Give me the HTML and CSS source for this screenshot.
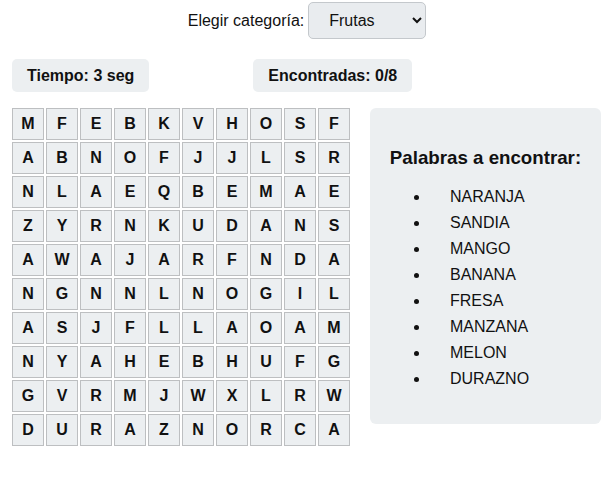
FILE: index.html
```html
<!DOCTYPE html>
<html lang="es">
<head>
<meta charset="UTF-8">
<title>Sopa de letras</title>
<link rel="stylesheet" href="styles.css">
</head>
<body>

<div class="top">
<label for="cat">Elegir categoría:</label>
<select id="cat">
<option>Frutas</option>
<option>Animales</option>
<option>Colores</option>
</select>
</div>

<div class="stats">
<div class="stat">Tiempo: <span id="time">3</span> seg</div>
<div class="stat">Encontradas: <span id="found">0</span>/8</div>
</div>

<div class="main">

<div class="board" id="board"></div>

<div class="panel">
<h3>Palabras a encontrar:</h3>
<ul id="words">
<li>NARANJA</li>
<li>SANDIA</li>
<li>MANGO</li>
<li>BANANA</li>
<li>FRESA</li>
<li>MANZANA</li>
<li>MELON</li>
<li>DURAZNO</li>
</ul>
</div>

</div>

<script>
let rows=[
"MFEBKVHOSF",
"ABNOFJJLSR",
"NLAEQBEMAE",
"ZYRNKUDANS",
"AWAJARFNDA",
"NGNNLNOGIL",
"ASJFLLAOAM",
"NYAHEBHUFG",
"GVRMJWXLRW",
"DURAZNORCA"
]

let board=document.getElementById("board")

board.innerHTML=rows.map(r=>
r.split("").map(c=>`<div class="cell">${c}</div>`).join("")
).join("")
</script>

</body>
</html>
```

FILE: styles.css
```css
body{
font-family:"Liberation Sans", Arial, sans-serif;
margin:0;
background:white;
color:#111;
}

.top{
display:flex;
justify-content:center;
align-items:center;
gap:4px;
margin-top:2px;
font-size:16px;
}

select{
width:118px;
height:37px;
padding:0 10px 0 16px;
font-size:16px;
font-family:inherit;
background:#e9ecef;
border:1px solid #c4c8cc;
border-radius:5px;
color:#111;
}

.stats{
display:flex;
gap:104px;
padding-left:12px;
margin-top:20px;
}

.stat{
background:#eceff1;
padding:8px 15px 7px;
line-height:18px;
border-radius:5px;
font-weight:bold;
font-size:16px;
}

.main{
display:flex;
align-items:flex-start;
gap:20px;
padding-left:12px;
margin-top:16px;
}

.board{
display:grid;
grid-template-columns:repeat(10,32px);
grid-auto-rows:32px;
gap:2px;
}

.cell{
background:#eceff1;
border:1px solid #bdbfc1;
display:flex;
align-items:center;
justify-content:center;
font-weight:bold;
font-size:16px;
}

.panel{
background:#eceff1;
width:211px;
padding:20px 10px;
border-radius:6px;
}

.panel h3{
text-align:center;
white-space:nowrap;
font-size:18.72px;
line-height:22px;
margin:19px 0 19px;
}

.panel ul{
margin:0 0 16px;
padding-left:50px;
}

.panel li{
padding-left:20px;
line-height:18px;
margin-bottom:8px;
font-size:16px;
}
```
